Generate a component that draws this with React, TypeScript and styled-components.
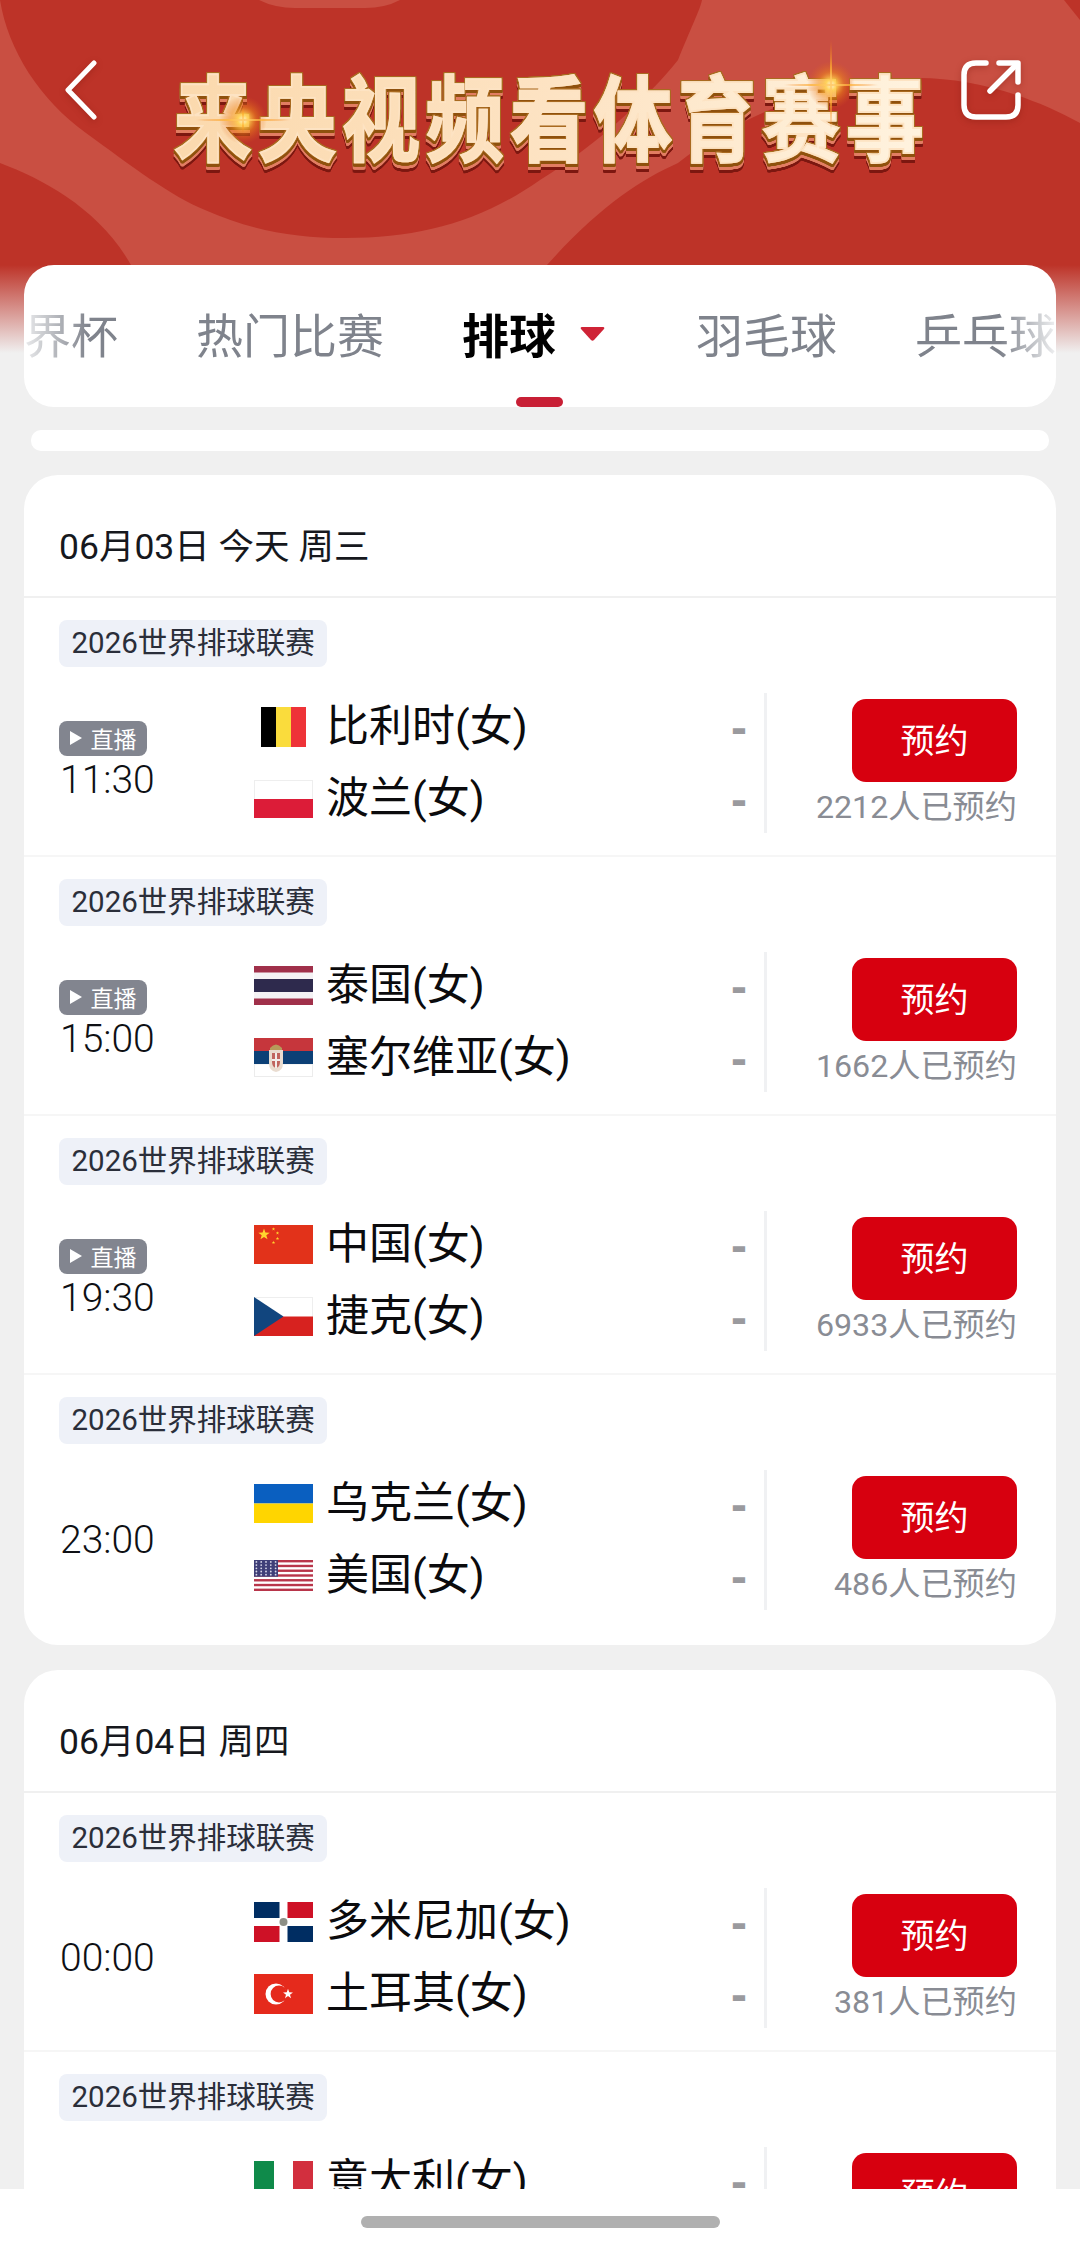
import React from 'react';
import styled, { createGlobalStyle } from 'styled-components';

const GlobalStyle = createGlobalStyle`
  html, body {
    margin: 0;
    padding: 0;
    background: #f0f0f0;
    font-family: Roboto, "Noto Sans CJK SC", sans-serif;
  }
  * {
    box-sizing: border-box;
  }
`;

const Page = styled.div`
  position: relative;
  width: 1080px;
  height: 2255px;
  overflow: hidden;
  background: #f0f0f0;
`;

const Hero = styled.header`
  position: relative;
  height: 353px;
  padding: 60px 59px 0 65px;
  display: flex;
  align-items: flex-start;
  background: #bd3328;
  &::after {
    content: '';
    position: absolute;
    left: 0;
    right: 0;
    top: 265px;
    height: 88px;
    background: linear-gradient(180deg, rgba(240, 240, 240, 0), #f0f0f0);
  }
`;

const HeroArt = styled.svg`
  position: absolute;
  left: 0;
  top: 0;
`;

const IconButton = styled.div`
  position: relative;
  flex: none;
  display: flex;
  filter: drop-shadow(0 2px 3px rgba(120, 20, 10, 0.35));
`;

const TitleWrap = styled.div`
  position: relative;
  flex: none;
  width: 756px;
  margin: 8px 31px 0 77px;
  filter: drop-shadow(1px 0 0 #a96a20) drop-shadow(-1px 0 0 #a96a20) drop-shadow(0 -1px 0 #a96a20)
    drop-shadow(0 3px 0 #8f510d) drop-shadow(0 3px 0 #e27d62) drop-shadow(0 3px 0 #7c1710);
`;

const Title = styled.h1`
  margin: 0;
  display: block;
  font-family: "Noto Sans CJK SC", sans-serif;
  font-size: 78px;
  font-weight: 700;
  line-height: 90px;
  letter-spacing: 6px;
  white-space: nowrap;
  transform: scaleY(1.2);
  background: linear-gradient(90deg, #fbd9ad 0%, #fde3c3 50%, #fff3df 100%);
  -webkit-background-clip: text;
  background-clip: text;
  color: transparent;
  -webkit-text-stroke: 1.5px #fde3c3;
`;

const Sparkle = styled.svg<{ $x: number; $y: number }>`
  position: absolute;
  left: ${p => p.$x}px;
  top: ${p => p.$y}px;
  z-index: 2;
`;

const TabCard = styled.nav`
  position: relative;
  z-index: 1;
  height: 142px;
  margin: -88px 24px 0;
  background: #fff;
  border-radius: 30px;
  overflow: hidden;
`;

const TabStrip = styled.div`
  display: flex;
  gap: 78px;
  height: 142px;
  margin-left: -47px;
  width: calc(100% + 47px);
  -webkit-mask-image: linear-gradient(90deg, transparent 40px, rgba(0,0,0,0.2) 50px, #000 112px, #000 calc(100% - 56px), rgba(0,0,0,0.12) 100%);
  mask-image: linear-gradient(90deg, transparent 40px, rgba(0,0,0,0.2) 50px, #000 112px, #000 calc(100% - 56px), rgba(0,0,0,0.12) 100%);
`;

const Tab = styled.div<{ $active?: boolean }>`
  position: relative;
  flex: none;
  display: flex;
  align-items: center;
  gap: 24px;
  height: 134px;
  padding-right: ${p => (p.$active ? '13px' : '0')};
  font-family: "Noto Sans CJK SC", sans-serif;
  font-size: 47px;
  line-height: 1;
  font-weight: ${p => (p.$active ? 700 : 400)};
  color: ${p => (p.$active ? '#000' : '#7f838c')};
`;

const TabCaret = styled.svg`
  margin-top: 3px;
`;

const TabIndicator = styled.span`
  position: absolute;
  left: 50%;
  bottom: -8px;
  width: 47px;
  height: 10px;
  margin-left: -24px;
  background: #c81f35;
  border-radius: 5px;
`;

const Strip = styled.div`
  height: 21px;
  margin: 23px 31px 24px;
  background: #fff;
  border-radius: 10px;
`;

const DayCard = styled.section`
  margin: 0 24px 25px;
  background: #fff;
  border-radius: 34px;
  overflow: hidden;
`;

const DayHeader = styled.div`
  display: flex;
  align-items: center;
  height: 123px;
  padding: 0 35px;
  padding-top: 15px;
  border-bottom: 2px solid #f0f0f0;
  font-size: 35.5px;
  color: #16181d;
  white-space: pre;
`;

const Match = styled.div<{ $last?: boolean }>`
  padding: 22px 39px ${p => (p.$last ? '35px' : '22px')} 35px;
  border-bottom: ${p => (p.$last ? '0' : '2px solid #f6f6f6')};
`;

const League = styled.div`
  display: inline-flex;
  align-items: center;
  height: 47px;
  padding: 0 12.5px;
  background: #eef1f8;
  border-radius: 8px;
  font-size: 29.5px;
  line-height: 1;
  color: #2a2e3a;
  vertical-align: top;
`;

const MatchBody = styled.div`
  display: flex;
  height: 140px;
  margin-top: 26px;
`;

const TimeColumn = styled.div`
  flex: none;
  width: 195px;
  display: flex;
  flex-direction: column;
  justify-content: center;
  align-items: flex-start;
`;

const LiveBadge = styled.div`
  display: flex;
  align-items: center;
  justify-content: center;
  gap: 9px;
  width: 88px;
  height: 35px;
  margin-top: -3px;
  margin-bottom: 2px;
  background: #82858f;
  border-radius: 8px;
  font-family: "Noto Sans CJK SC", sans-serif;
  font-size: 23px;
  line-height: 1;
  color: #fff;
`;

const Time = styled.div`
  font-size: 39px;
  font-weight: 300;
  line-height: 45px;
  color: #0e1014;
  padding-left: 1px;
`;

const Teams = styled.div`
  flex: none;
  width: 492px;
  display: flex;
  flex-direction: column;
  gap: 8px;
`;

const TeamRow = styled.div`
  display: flex;
  align-items: center;
  height: 64px;
`;

const FlagBox = styled.span`
  flex: none;
  width: 59px;
  display: flex;
  justify-content: center;
  margin-top: 3px;
`;

const TeamName = styled.span`
  margin-left: 13px;
  padding-top: 3px;
  font-size: 43px;
  line-height: 1;
  color: #0b0b0d;
`;

const Score = styled.span`
  margin-left: auto;
  margin-right: -1px;
  padding-top: 6px;
  font-family: "Liberation Sans", sans-serif;
  font-weight: 700;
  font-size: 48px;
  line-height: 1;
  color: #9a9a9e;
`;

const Divider = styled.div`
  flex: none;
  width: 3px;
  margin-left: 18px;
  background: #f0f1f3;
`;

const ActionColumn = styled.div`
  flex: 1;
  display: flex;
  flex-direction: column;
  align-items: flex-end;
  padding-top: 6px;
`;

const ReserveButton = styled.div`
  width: 165px;
  height: 83px;
  display: flex;
  align-items: center;
  justify-content: center;
  padding-bottom: 4px;
  background: #d7000f;
  border-radius: 14px;
  font-family: "Noto Sans CJK SC", sans-serif;
  font-size: 34px;
  line-height: 1;
  color: #fff;
`;

const ReserveCount = styled.div`
  margin-top: 5px;
  font-size: 32.2px;
  line-height: 40px;
  color: #898c94;
  white-space: nowrap;
`;

const HomeBar = styled.div`
  position: absolute;
  left: 0;
  right: 0;
  bottom: 0;
  z-index: 3;
  height: 66px;
  display: flex;
  justify-content: center;
  padding-top: 27px;
  background: #fff;
`;

const HomeHandle = styled.span`
  width: 359px;
  height: 12px;
  background: #b0b0b0;
  border-radius: 6px;
`;

type FlagCode = 'be' | 'pl' | 'th' | 'rs' | 'cn' | 'cz' | 'ua' | 'us' | 'do' | 'tr' | 'it';

const Star = ({ cx, cy, r, fill }: { cx: number; cy: number; r: number; fill: string }) => {
  const pts = Array.from({ length: 10 }, (_, i) => {
    const a = -Math.PI / 2 + (i * Math.PI) / 5;
    const d = i % 2 ? r * 0.4 : r;
    return `${cx + d * Math.cos(a)},${cy + d * Math.sin(a)}`;
  }).join(' ');
  return <polygon points={pts} fill={fill} />;
};

const Flag = ({ code }: { code: FlagCode }) => {
  switch (code) {
    case 'be':
      return (
        <svg width="45" height="40" viewBox="0 0 45 40">
          <rect width="15" height="40" fill="#000" />
          <rect x="15" width="15" height="40" fill="#fadc3c" />
          <rect x="30" width="15" height="40" fill="#ee3338" />
        </svg>
      );
    case 'pl':
      return (
        <svg width="59" height="38" viewBox="0 0 59 38">
          <rect x="0.5" y="0.5" width="58" height="37" fill="#fff" stroke="#eeeeee" />
          <rect y="19" width="59" height="19" fill="#dc1c38" />
        </svg>
      );
    case 'th':
      return (
        <svg width="59" height="39" viewBox="0 0 59 39">
          <rect width="59" height="39" fill="#a0304a" />
          <rect y="6.5" width="59" height="26" fill="#f4f2f4" />
          <rect y="13" width="59" height="13" fill="#2e2a4d" />
        </svg>
      );
    case 'rs':
      return (
        <svg width="59" height="39" viewBox="0 0 59 39">
          <rect width="59" height="39" fill="#fff" />
          <rect x="0.5" y="26" width="58" height="12.5" fill="#fff" stroke="#ececec" />
          <rect width="59" height="13" fill="#c6363c" />
          <rect y="13" width="59" height="13" fill="#0c4076" />
          <path d="M16 10 Q22 3 28 10 L28 12 L16 12Z" fill="#b79a5a" />
          <path d="M15 12 H29 V25 Q29 33 22 34 Q15 33 15 25Z" fill="#e9dcd0" />
          <path d="M18 15 H26 V24 Q26 29 22 30 Q18 29 18 24Z" fill="#c0655f" />
          <rect x="21" y="15" width="2" height="15" fill="#f2ecea" />
          <rect x="18" y="21" width="8" height="2" fill="#f2ecea" />
        </svg>
      );
    case 'cn':
      return (
        <svg width="59" height="39" viewBox="0 0 59 39">
          <rect width="59" height="39" fill="#e2321a" />
          <Star cx={10} cy={9.5} r={6} fill="#ffd52e" />
          <Star cx={19.5} cy={4} r={1.8} fill="#ffd52e" />
          <Star cx={23.5} cy={8} r={1.8} fill="#ffd52e" />
          <Star cx={23.5} cy={13.5} r={1.8} fill="#ffd52e" />
          <Star cx={19.5} cy={17.5} r={1.8} fill="#ffd52e" />
        </svg>
      );
    case 'cz':
      return (
        <svg width="59" height="39" viewBox="0 0 59 39">
          <rect x="0.5" y="0.5" width="58" height="38" fill="#fff" stroke="#eeeeee" />
          <rect y="19.5" width="59" height="19.5" fill="#d7221f" />
          <polygon points="0,0 29.5,19.5 0,39" fill="#11457e" />
        </svg>
      );
    case 'ua':
      return (
        <svg width="59" height="39" viewBox="0 0 59 39">
          <rect width="59" height="19.5" fill="#0a5fc0" />
          <rect y="19.5" width="59" height="19.5" fill="#ffd500" />
        </svg>
      );
    case 'us':
      return (
        <svg width="59" height="31" viewBox="0 0 59 31">
          <rect width="59" height="31" fill="#fff" />
          {Array.from({ length: 7 }, (_, i) => (
            <rect key={i} y={(i * 2 * 31) / 13} width="59" height={31 / 13} fill="#b8354a" />
          ))}
          <rect width="24" height="16.7" fill="#3f3f78" />
          {Array.from({ length: 25 }, (_, i) => (
            <circle key={i} cx={2.4 + (i % 5) * 4.8} cy={1.9 + Math.floor(i / 5) * 3.2} r="0.9" fill="#d9d9ea" />
          ))}
        </svg>
      );
    case 'do':
      return (
        <svg width="59" height="40" viewBox="0 0 59 40">
          <rect width="59" height="40" fill="#fff" />
          <rect width="25.5" height="16" fill="#002d62" />
          <rect x="33.5" width="25.5" height="16" fill="#ce1126" />
          <rect y="24" width="25.5" height="16" fill="#ce1126" />
          <rect x="33.5" y="24" width="25.5" height="16" fill="#002d62" />
          <circle cx="29.5" cy="20" r="4" fill="#8d8f86" />
        </svg>
      );
    case 'tr':
      return (
        <svg width="59" height="40" viewBox="0 0 59 40">
          <rect width="59" height="40" fill="#e52a1c" />
          <circle cx="22" cy="20" r="10.5" fill="#fff" />
          <circle cx="25" cy="20" r="8.4" fill="#e52a1c" />
          <Star cx={34} cy={20} r={5.2} fill="#fff" />
        </svg>
      );
    case 'it':
      return (
        <svg width="59" height="40" viewBox="0 0 59 40">
          <rect width="20" height="40" fill="#0f8a4a" />
          <rect x="20" width="19" height="40" fill="#fff" />
          <rect x="39" width="20" height="40" fill="#d22f3e" />
        </svg>
      );
  }
};

const GlintArt = ({ size, stretch, id }: { size: number; stretch: number; id: string }) => (
  <Sparkle
    $x={id === 'a' ? 243 - size / 2 : 831 - size / 2}
    $y={id === 'a' ? 120 - size / 2 : 85 - size / 2}
    width={size}
    height={size}
    viewBox="-50 -50 100 100"
  >
    <defs>
      <radialGradient id={`glow-${id}`}>
        <stop offset="0" stopColor="#fffbe0" />
        <stop offset="0.22" stopColor="#ffd256" stopOpacity="0.95" />
        <stop offset="0.55" stopColor="#f08a1c" stopOpacity="0.5" />
        <stop offset="1" stopColor="#e0601a" stopOpacity="0" />
      </radialGradient>
      <radialGradient id={`ray-${id}`}>
        <stop offset="0" stopColor="#fff6c8" />
        <stop offset="0.5" stopColor="#ffb030" stopOpacity="0.7" />
        <stop offset="1" stopColor="#f07010" stopOpacity="0" />
      </radialGradient>
    </defs>
    <circle r="24" fill={`url(#glow-${id})`} />
    <ellipse rx="50" ry="1.6" fill={`url(#ray-${id})`} />
    <ellipse rx="1.6" ry={stretch} fill={`url(#ray-${id})`} />
  </Sparkle>
);

interface MatchData {
  time: string;
  live?: boolean;
  home: [FlagCode, string];
  away: [FlagCode, string];
  count: string;
}

const LEAGUE = '2026世界排球联赛';

const days: { label: string; matches: MatchData[] }[] = [
  {
    label: '06月03日 今天 周三',
    matches: [
      { time: '11:30', live: true, home: ['be', '比利时(女)'], away: ['pl', '波兰(女)'], count: '2212人已预约' },
      { time: '15:00', live: true, home: ['th', '泰国(女)'], away: ['rs', '塞尔维亚(女)'], count: '1662人已预约' },
      { time: '19:30', live: true, home: ['cn', '中国(女)'], away: ['cz', '捷克(女)'], count: '6933人已预约' },
      { time: '23:00', home: ['ua', '乌克兰(女)'], away: ['us', '美国(女)'], count: '486人已预约' },
    ],
  },
  {
    label: '06月04日 周四',
    matches: [
      { time: '00:00', home: ['do', '多米尼加(女)'], away: ['tr', '土耳其(女)'], count: '381人已预约' },
      { time: '03:30', home: ['it', '意大利(女)'], away: ['pl', '波兰(女)'], count: '512人已预约' },
    ],
  },
];

const tabs = ['世界杯', '热门比赛', '排球', '羽毛球', '乒乓球'];

const Team = ({ team }: { team: [FlagCode, string] }) => (
  <TeamRow>
    <FlagBox>
      <Flag code={team[0]} />
    </FlagBox>
    <TeamName>{team[1]}</TeamName>
    <Score>-</Score>
  </TeamRow>
);

export default function App() {
  return (
    <Page>
      <GlobalStyle />
      <Hero>
        <HeroArt width="1080" height="265" viewBox="0 0 1080 265">
          <rect width="1080" height="265" fill="#c94f42" />
          <path
            d="M0 0 C8 50 40 100 86 133 C130 165 172 197 205 210 C250 230 295 238 345 238 C420 238 480 222 540 180 C600 143 650 95 678 60 C690 30 700 10 702 0 Z"
            fill="#bd3328"
          />
          <path d="M0 163 C45 180 100 210 131 265 L0 265 Z" fill="#bd3328" />
          <path
            d="M547 265 C599 207 640 180 678 163 C740 115 830 78 919 78 C970 78 1030 95 1080 123 L1080 265 Z"
            fill="#bd3328"
          />
          <path d="M1064 0 L1080 20 L1080 0 Z" fill="#bd3328" />
          <path d="M259 0 Q275 8 295 8 H365 Q385 8 400 0 Z" fill="#c94f42" />
        </HeroArt>
        <IconButton>
          <svg width="32" height="60" viewBox="0 0 32 60" fill="none">
            <path d="M29 3 L3 30 L29 57" stroke="#fff" strokeWidth="5" strokeLinecap="round" strokeLinejoin="round" />
          </svg>
        </IconButton>
        <TitleWrap>
          <Title>来央视频看体育赛事</Title>
        </TitleWrap>
        <IconButton>
          <svg width="60" height="60" viewBox="0 0 60 60" fill="none" stroke="#fff" strokeWidth="5.5" strokeLinecap="round" strokeLinejoin="round">
            <path d="M25 3 H15 Q3 3 3 15 V45 Q3 57 15 57 H45 Q57 57 57 45 V35" />
            <path d="M29 31 L56 4" />
            <path d="M38 3 H57 V22" />
          </svg>
        </IconButton>
        <GlintArt id="a" size={100} stretch={14} />
        <GlintArt id="b" size={100} stretch={48} />
      </Hero>

      <TabCard>
        <TabStrip>
          {tabs.map(tab => (
            <Tab key={tab} $active={tab === '排球'}>
              {tab}
              {tab === '排球' && (
                <>
                  <TabCaret width="25" height="14" viewBox="0 0 25 14">
                    <path d="M2 0 H23 Q25 0 24 2 L14 13 Q12.5 14.5 11 13 L1 2 Q0 0 2 0Z" fill="#cf2336" />
                  </TabCaret>
                  <TabIndicator />
                </>
              )}
            </Tab>
          ))}
        </TabStrip>
      </TabCard>

      <Strip />

      {days.map(day => (
        <DayCard key={day.label}>
          <DayHeader>{day.label}</DayHeader>
          {day.matches.map((m, i) => (
            <Match key={m.time} $last={i === day.matches.length - 1}>
              <League>{LEAGUE}</League>
              <MatchBody>
                <TimeColumn>
                  {m.live && (
                    <LiveBadge>
                      <svg width="12" height="14" viewBox="0 0 12 14">
                        <path d="M0 0 L12 7 L0 14Z" fill="#fff" />
                      </svg>
                      直播
                    </LiveBadge>
                  )}
                  <Time>{m.time}</Time>
                </TimeColumn>
                <Teams>
                  <Team team={m.home} />
                  <Team team={m.away} />
                </Teams>
                <Divider />
                <ActionColumn>
                  <ReserveButton>预约</ReserveButton>
                  <ReserveCount>{m.count}</ReserveCount>
                </ActionColumn>
              </MatchBody>
            </Match>
          ))}
        </DayCard>
      ))}

      <HomeBar>
        <HomeHandle />
      </HomeBar>
    </Page>
  );
}
